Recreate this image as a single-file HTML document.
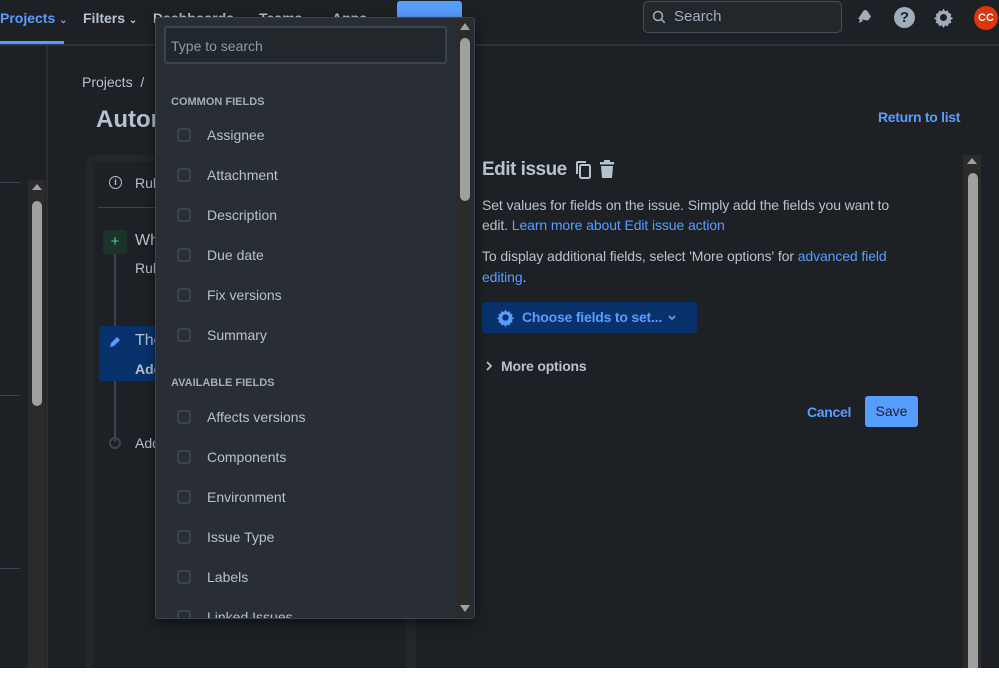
<!DOCTYPE html>
<html><head><meta charset="utf-8"><style>
*{box-sizing:border-box;margin:0;padding:0}
body{width:999px;height:674px;overflow:hidden;background:#fff;font-family:"Liberation Sans",sans-serif;position:relative}
.app{position:absolute;left:0;top:0;width:999px;height:668px;background:#1d2125;overflow:hidden}
.a{position:absolute}
.nav{color:#b6c2cf;font-size:14px;font-weight:bold}
.t{color:#b6c2cf;font-size:14px}
.lnk{color:#579dff}
.cb{position:absolute;left:177px;width:14px;height:14px;border:2px solid #3b444c;border-radius:3px}
.it{position:absolute;left:207px;color:#b6c2cf;font-size:14px}
.hd{position:absolute;left:171px;color:#9fadbc;font-size:11px;font-weight:bold}
</style></head><body>
<div class="app">
<div class="a" style="left:0;top:44px;width:999px;height:2px;background:#2c333a"></div>
<div class="a" style="left:0;top:41px;width:64px;height:3px;background:#579dff"></div>
<div class="a nav" style="left:0;top:10px;color:#579dff">Projects <span style="font-size:10px">⌄</span></div>
<div class="a nav" style="left:83px;top:10px">Filters <span style="font-size:10px">⌄</span></div>
<div class="a nav" style="left:153px;top:10px">Dashboards ⌄</div>
<div class="a nav" style="left:259px;top:10px">Teams ⌄</div>
<div class="a nav" style="left:332px;top:10px">Apps ⌄</div>
<div class="a" style="left:397px;top:1px;width:65px;height:32px;background:#579dff;border-radius:3px"></div>
<div class="a" style="left:643px;top:1px;width:199px;height:32px;border:1px solid #454f59;border-radius:5px;background:#22272b"></div>
<svg class="a" style="left:651px;top:9px" width="16" height="16" viewBox="0 0 16 16"><circle cx="7" cy="7" r="4.5" fill="none" stroke="#9fadbc" stroke-width="1.5"/><path d="M10.3 10.3l3.5 3.5" stroke="#9fadbc" stroke-width="1.5"/></svg>
<div class="a t" style="left:674px;top:8px;font-size:15px;color:#9fadbc">Search</div>
<svg class="a" style="left:855px;top:6px" width="20" height="20" viewBox="0 0 20 20"><path d="M3 13l6-9 3 .5 4 6-3 4z" fill="#9fadbc"/><path d="M5 12l-1 5 4-2z" fill="#9fadbc"/></svg>
<div class="a" style="left:894px;top:7px;width:21px;height:21px;border-radius:50%;background:#9fadbc;color:#1d2125;font-weight:bold;font-size:15px;text-align:center;line-height:21px">?</div>
<svg class="a" style="left:933px;top:7px" width="21" height="21" viewBox="0 0 24 24"><path fill="#9fadbc" d="M12 8a4 4 0 100 8 4 4 0 000-8zm0-6l2 3 3-1 1 3 3 1-1 3 3 2-3 2 1 3-3 1-1 3-3-1-2 3-2-3-3 1-1-3-3-1 1-3-3-2 3-2-1-3 3-1 1-3 3 1z"/><circle cx="12" cy="12" r="3" fill="#1d2125"/></svg>
<div class="a" style="left:974px;top:6px;width:24px;height:24px;border-radius:50%;background:#de350b;color:#fff;font-size:11px;font-weight:bold;line-height:24px;text-align:center">CC</div>
<div class="a" style="left:46px;top:46px;width:2px;height:622px;background:#282e33"></div>
<div class="a" style="left:0;top:182px;width:20px;height:1px;background:#3b444c"></div>
<div class="a" style="left:0;top:395px;width:20px;height:1px;background:#3b444c"></div>
<div class="a" style="left:0;top:568px;width:20px;height:1px;background:#3b444c"></div>
<div class="a" style="left:28px;top:180px;width:17px;height:488px;background:#2b2b2b"></div>
<div class="a" style="left:32px;top:184px;width:0;height:0;border-left:5px solid transparent;border-right:5px solid transparent;border-bottom:6px solid #a0a0a0"></div>
<div class="a" style="left:32px;top:201px;width:10px;height:205px;background:#a0a0a0;border-radius:5px"></div>
<div class="a t" style="left:82px;top:74px">Projects &nbsp;/</div>
<div class="a" style="left:96px;top:106px;color:#b6c2cf;font-size:24px;font-weight:bold">Automation</div>
<div class="a" style="left:86px;top:155px;width:328px;height:520px;background:#22272b;border-radius:8px"></div>
<div class="a" style="left:94px;top:162px;width:312px;height:510px;background:#1d2125;border-radius:6px"></div>
<div class="a" style="left:98px;top:207px;width:300px;height:1px;background:#3b444c"></div>
<div class="a" style="left:109px;top:176px;width:13px;height:13px;border:1.5px solid #b6c2cf;border-radius:50%;color:#b6c2cf;font-size:9px;text-align:center;line-height:10px;font-weight:bold">i</div>
<div class="a t" style="left:135px;top:175px">Rule details</div>
<div class="a" style="left:114px;top:252px;width:2px;height:190px;background:#3b444c"></div>
<div class="a" style="left:103px;top:230px;width:24px;height:24px;background:#1c3329;border-radius:3px;color:#4bce97;text-align:center;line-height:24px;font-size:15px">+</div>
<div class="a t" style="left:135px;top:232px;font-size:16px">When</div>
<div class="a t" style="left:135px;top:260px">Rule</div>
<div class="a" style="left:99px;top:326px;width:310px;height:55px;background:#09326c;border-radius:3px"></div>
<svg class="a" style="left:109px;top:335px" width="13" height="13" viewBox="0 0 13 13"><path d="M1 12l1-4 6-6 3 3-6 6z" fill="#579dff"/></svg>
<div class="a t" style="left:135px;top:332px;font-size:16px">Then</div>
<div class="a t" style="left:135px;top:361px;font-weight:bold">Add</div>
<div class="a" style="left:109px;top:437px;width:12px;height:12px;border:2px solid #3b444c;border-radius:50%"></div>
<div class="a t" style="left:135px;top:435px">Add</div>
<div class="a" style="left:414px;top:155px;width:2px;height:513px;background:#22272b"></div>
<div class="a lnk" style="left:878px;top:109px;font-size:14px;font-weight:bold;letter-spacing:-0.3px">Return to list</div>
<div class="a" style="left:482px;top:159px;color:#b6c2cf;font-size:19px;font-weight:bold;letter-spacing:-0.5px">Edit issue</div>
<svg class="a" style="left:575px;top:160px" width="18" height="20" viewBox="0 0 18 20"><rect x="5" y="5" width="10" height="13" rx="1.5" fill="none" stroke="#b6c2cf" stroke-width="2"/><path d="M2 14V3a1 1 0 011-1h8" fill="none" stroke="#b6c2cf" stroke-width="2"/></svg>
<svg class="a" style="left:598px;top:160px" width="18" height="19" viewBox="0 0 18 19"><rect x="2" y="2" width="14" height="2.5" fill="#b6c2cf"/><rect x="6" y="0" width="6" height="2" fill="#b6c2cf"/><path d="M3 6h12l-1 12H4z" fill="#b6c2cf"/></svg>
<div class="a t" style="left:482px;top:195px;width:430px;line-height:20px;letter-spacing:-0.1px">Set values for fields on the issue. Simply add the fields you want to edit. <span class="lnk">Learn more about Edit issue action</span></div>
<div class="a t" style="left:482px;top:246px;width:430px;line-height:21px;letter-spacing:-0.1px">To display additional fields, select 'More options' for <span class="lnk">advanced field editing</span>.</div>
<div class="a" style="left:482px;top:302px;width:215px;height:31px;background:#09326c;border-radius:3px"></div>
<svg class="a" style="left:496px;top:308px" width="19" height="19" viewBox="0 0 24 24"><path fill="#579dff" d="M12 8a4 4 0 100 8 4 4 0 000-8zm0-6l2 3 3-1 1 3 3 1-1 3 3 2-3 2 1 3-3 1-1 3-3-1-2 3-2-3-3 1-1-3-3-1 1-3-3-2 3-2-1-3 3-1 1-3 3 1z"/><circle cx="12" cy="12" r="3.5" fill="#09326c"/></svg>
<div class="a lnk" style="left:522px;top:309px;font-size:14px;font-weight:bold;letter-spacing:-0.2px">Choose fields to set...</div>
<svg class="a" style="left:667px;top:314px" width="10" height="8" viewBox="0 0 10 8"><path d="M2 2l3 3 3-3" fill="none" stroke="#579dff" stroke-width="1.8"/></svg>
<svg class="a" style="left:485px;top:361px" width="8" height="10" viewBox="0 0 8 10"><path d="M2 1l4 4-4 4" fill="none" stroke="#b6c2cf" stroke-width="1.8"/></svg>
<div class="a t" style="left:501px;top:358px;font-weight:bold;letter-spacing:-0.2px">More options</div>
<div class="a lnk" style="left:807px;top:404px;font-size:14px;font-weight:bold;letter-spacing:-0.3px">Cancel</div>
<div class="a" style="left:865px;top:396px;width:53px;height:31px;background:#579dff;border-radius:3px;color:#1d2125;font-size:14px;text-align:center;line-height:31px">Save</div>
<div class="a" style="left:963px;top:155px;width:18px;height:513px;background:#2b2b2b"></div>
<div class="a" style="left:967px;top:158px;width:0;height:0;border-left:5px solid transparent;border-right:5px solid transparent;border-bottom:6px solid #a0a0a0"></div>
<div class="a" style="left:968px;top:173px;width:10px;height:500px;background:#a0a0a0;border-radius:5px"></div>
<div class="a" style="left:155px;top:17px;width:320px;height:602px;background:#282e33;border:1px solid #3b444c;border-radius:3px;box-shadow:0 4px 12px rgba(0,0,0,.5);overflow:hidden">
<div class="a" style="left:299px;top:0;width:19px;height:600px;background:#2b2b2b"></div>
<div class="a" style="left:304px;top:5px;width:0;height:0;border-left:5px solid transparent;border-right:5px solid transparent;border-bottom:7px solid #a0a0a0"></div>
<div class="a" style="left:304px;top:20px;width:10px;height:163px;background:#a0a0a0;border-radius:5px"></div>
<div class="a" style="left:304px;top:587px;width:0;height:0;border-left:5px solid transparent;border-right:5px solid transparent;border-top:7px solid #a0a0a0"></div>
</div>
<div class="a" style="left:164px;top:26px;width:283px;height:38px;border:2px solid #3b444c;border-radius:3px;background:#22272b"></div>
<div class="a" style="left:171px;top:38px;color:#8c9bab;font-size:14px">Type to search</div>
<div class="hd" style="top:96px">COMMON FIELDS</div>
<div class="cb" style="top:128px"></div><div class="it" style="top:127px">Assignee</div>
<div class="cb" style="top:168px"></div><div class="it" style="top:167px">Attachment</div>
<div class="cb" style="top:208px"></div><div class="it" style="top:207px">Description</div>
<div class="cb" style="top:248px"></div><div class="it" style="top:247px">Due date</div>
<div class="cb" style="top:288px"></div><div class="it" style="top:287px">Fix versions</div>
<div class="cb" style="top:328px"></div><div class="it" style="top:327px">Summary</div>
<div class="hd" style="top:377px">AVAILABLE FIELDS</div>
<div class="cb" style="top:410px"></div><div class="it" style="top:409px">Affects versions</div>
<div class="cb" style="top:450px"></div><div class="it" style="top:449px">Components</div>
<div class="cb" style="top:490px"></div><div class="it" style="top:489px">Environment</div>
<div class="cb" style="top:530px"></div><div class="it" style="top:529px">Issue Type</div>
<div class="cb" style="top:570px"></div><div class="it" style="top:569px">Labels</div>
<div class="a" style="left:156px;top:608px;width:298px;height:10px;overflow:hidden"><div class="cb" style="left:21px;top:2px"></div><div class="it" style="left:51px;top:1px">Linked Issues</div></div>
</div>
</body></html>
